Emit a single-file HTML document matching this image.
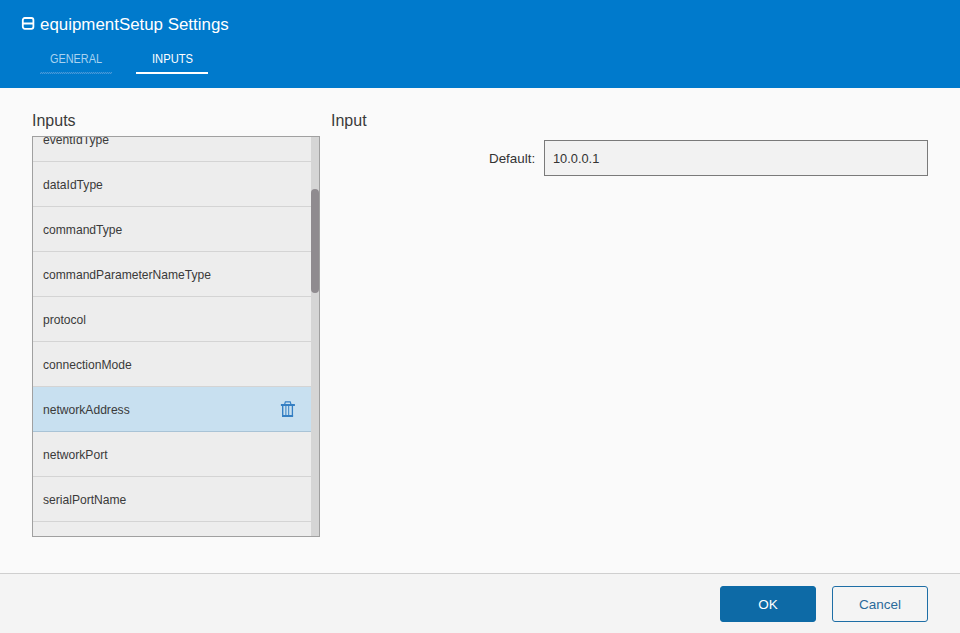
<!DOCTYPE html>
<html>
<head>
<meta charset="utf-8">
<style>
html,body{margin:0;padding:0;}
body{width:960px;height:633px;overflow:hidden;background:#fafafa;position:relative;font-family:"Liberation Sans",sans-serif;}
.abs{position:absolute;white-space:nowrap;}
#hdr{position:absolute;left:0;top:0;width:960px;height:88px;background:#007acc;}
#title{left:40px;top:14px;font-size:16.9px;line-height:22px;color:#fff;}
.tab{font-size:11.2px;line-height:14px;top:52px;transform:scaleY(1.14);transform-origin:0 11px;}
#tgen{left:50px;color:#a9d3f0;font-size:10.9px;}
#tinp{left:152px;color:#fff;}
#ugen{left:40px;top:72px;width:72px;height:2px;background:repeating-conic-gradient(#4898d8 0 25%,#1282cf 0 50%) 0 0/2px 2px;}
#uinp{left:136px;top:72px;width:72px;height:2px;background:#fff;}
.h2{font-size:16px;line-height:20px;color:#3a3a3a;top:111px;}
#list{position:absolute;left:32px;top:136px;width:286px;height:399px;border:1px solid #a0a0a0;background:#ededed;overflow:hidden;}
.row{position:absolute;left:0;width:278px;height:44px;border-bottom:1px solid #d4d4d4;background:#ededed;}
.row span{position:absolute;left:10px;top:16px;font-size:12.1px;line-height:14px;color:#3a3a3a;}
.row.sel{background:#c8e0f0;border-bottom-color:#a9c3d6;}
#track{position:absolute;left:278px;top:0;width:8px;height:399px;background:#d5d5d5;}
#thumb{position:absolute;left:278px;top:52px;width:8px;height:104px;background:#8f8b8f;border-radius:4px;}
#lbl{left:489px;top:151px;font-size:13.4px;line-height:16px;color:#333;}
#inp{position:absolute;left:544px;top:140px;width:382px;height:34px;border:1px solid #7a7a7a;background:#f2f2f2;}
#inpv{left:553px;top:151px;font-size:12.8px;line-height:16px;color:#333;}
#ftr{position:absolute;left:0;top:573px;width:960px;height:60px;border-top:1px solid #cfcfcf;background:#f4f4f4;}
.btn{position:absolute;top:586px;width:96px;height:36px;box-sizing:border-box;border-radius:3px;font-size:13.5px;line-height:36px;text-align:center;}
#ok{left:720px;background:#0d6aa6;color:#fff;border:1px solid #0d6aa6;}
#cancel{left:832px;background:#f4f4f4;color:#2a6a9a;border:1px solid #1e6ea6;}
</style>
</head>
<body>
<div id="hdr">
  <svg class="abs" style="left:15px;top:10px" width="30" height="25" viewBox="0 0 30 25">
    <rect x="7.8" y="8" width="10.6" height="10.8" rx="2" ry="2" fill="none" stroke="#fff" stroke-width="1.8"/>
    <line x1="7.8" y1="13.5" x2="18.4" y2="13.5" stroke="#fff" stroke-width="2"/>
  </svg>
  <div id="title" class="abs">equipmentSetup Settings</div>
  <div id="tgen" class="abs tab">GENERAL</div>
  <div id="ugen" class="abs"></div>
  <div id="tinp" class="abs tab">INPUTS</div>
  <div id="uinp" class="abs"></div>
</div>

<div class="abs h2" style="left:32px">Inputs</div>
<div id="list">
  <div class="row" style="top:-20px"><span>eventIdType</span></div>
  <div class="row" style="top:25px"><span>dataIdType</span></div>
  <div class="row" style="top:70px"><span>commandType</span></div>
  <div class="row" style="top:115px"><span>commandParameterNameType</span></div>
  <div class="row" style="top:160px"><span>protocol</span></div>
  <div class="row" style="top:205px"><span>connectionMode</span></div>
  <div class="row sel" style="top:250px"><span>networkAddress</span>
    <svg class="abs" style="left:243px;top:9px" width="24" height="26" viewBox="0 0 24 26">
      <path d="M8.6 8.4 L9.4 5.8 H14.2 L15 8.4" fill="none" stroke="#347fc3" stroke-width="1.2"/>
      <rect x="4.9" y="8" width="14" height="2" fill="#347fc3"/>
      <line x1="6.7" y1="10" x2="6.7" y2="20" stroke="#347fc3" stroke-width="1.4"/>
      <line x1="16.4" y1="10" x2="16.4" y2="20" stroke="#347fc3" stroke-width="1.3"/>
      <line x1="9.9" y1="10" x2="9.9" y2="19.5" stroke="#347fc3" stroke-width="1"/>
      <line x1="12.7" y1="10" x2="12.7" y2="19.5" stroke="#347fc3" stroke-width="1"/>
      <rect x="6" y="19" width="11.1" height="2" fill="#347fc3"/>
    </svg>
  </div>
  <div class="row" style="top:295px"><span>networkPort</span></div>
  <div class="row" style="top:340px"><span>serialPortName</span></div>
  <div class="row" style="top:385px"><span></span></div>
  <div id="track"></div>
  <div id="thumb"></div>
</div>

<div class="abs h2" style="left:331px">Input</div>
<div id="lbl" class="abs">Default:</div>
<div id="inp"></div>
<div id="inpv" class="abs">10.0.0.1</div>

<div id="ftr"></div>
<div id="ok" class="btn">OK</div>
<div id="cancel" class="btn">Cancel</div>
</body>
</html>
